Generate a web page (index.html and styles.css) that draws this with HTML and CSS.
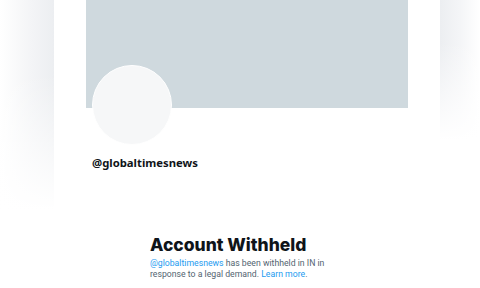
FILE: index.html
```html
<!DOCTYPE html>
<html>
<head>
<meta charset="utf-8">
<link rel="stylesheet" href="styles.css">
</head>
<body>
<div class="page">
  <div class="gutter-left"></div>
  <div class="spacer"></div>
  <main class="profile">
    <div class="banner"></div>
    <div class="avatar"></div>
    <div class="handle">@globaltimesnews</div>
    <section class="notice">
      <h1 class="title">Account Withheld</h1>
      <p class="desc"><a class="link">@globaltimesnews</a> has been withheld in IN in<br>response to a legal demand. <a class="link">Learn more</a>.</p>
    </section>
  </main>
  <div class="spacer"></div>
  <div class="gutter-right"></div>
</div>
</body>
</html>
```
FILE: styles.css
```css
html, body {
  margin: 0;
  padding: 0;
  background: #ffffff;
}
.page {
  display: grid;
  grid-template-columns: 54px 32px 322px 32px 40px;
  height: 288px;
  overflow: hidden;
  align-items: start;
}
.gutter-left {
  height: 210px;
  background:
    linear-gradient(to bottom, rgba(255,255,255,0) 0%, rgba(255,255,255,0) 35%, #ffffff 100%),
    linear-gradient(to right, #ffffff 0%, #f3f4f6 60%, #eceef1 100%);
}
.gutter-right {
  height: 140px;
  background:
    linear-gradient(to bottom, rgba(255,255,255,0) 0%, rgba(255,255,255,0) 30%, #ffffff 100%),
    linear-gradient(to right, #eceef1 0%, #f4f5f7 50%, #ffffff 100%);
}
.profile {
  display: flex;
  flex-direction: column;
  font-family: "Noto Sans", "Open Sans", sans-serif;
}
.banner {
  height: 108px;
  background: #cfd9de;
}
.avatar {
  width: 78px;
  height: 78px;
  border-radius: 50%;
  background: #f6f7f8;
  border: 1px solid #ffffff;
  margin: -43px 0 0 6px;
}
.handle {
  margin: 10px 0 0 6px;
  font-size: 11.3px;
  font-weight: 700;
  color: #0f1419;
  line-height: 16px;
}
.notice {
  margin: 64px 0 0 64px;
}
.title {
  margin: 0;
  font-family: "Inter", "Noto Sans", sans-serif;
  font-size: 17.5px;
  font-weight: 800;
  line-height: 20px;
  color: #0f1419;
}
.desc {
  margin: 3px 0 0;
  font-family: "Roboto", "Noto Sans", sans-serif;
  font-size: 8.7px;
  line-height: 10.5px;
  color: #536471;
  white-space: nowrap;
}
.link {
  color: #1d9bf0;
  text-decoration: none;
}
```
